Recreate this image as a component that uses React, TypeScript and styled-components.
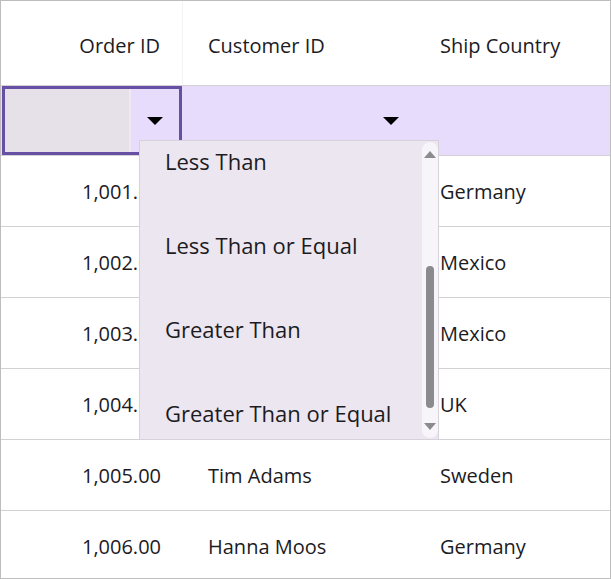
import React, { useLayoutEffect, useRef } from "react";
import styled, { createGlobalStyle } from "styled-components";

const GlobalStyle = createGlobalStyle`
  html, body { margin: 0; padding: 0; background: #ffffff; }
  body {
    font-family: "Open Sans", "Noto Sans", sans-serif;
    color: #1C1B1F;
  }
`;

const COLS = "182px 232px 1fr";

const Grid = styled.div`
  position: relative;
  box-sizing: border-box;
  width: 611px;
  height: 579px;
  border: 1px solid #bdbdbd;
  background: #ffffff;
  overflow: hidden;
  display: flex;
  flex-direction: column;
`;

const Row = styled.div<{ $height: number; $bg?: string }>`
  display: grid;
  grid-template-columns: ${COLS};
  height: ${(p) => p.$height}px;
  flex: none;
  border-bottom: 1px solid #d3d0d6;
  background: ${(p) => p.$bg ?? "transparent"};
`;

const Cell = styled.div<{ $align?: "left" | "right"; $divider?: boolean; $offset?: number }>`
  display: flex;
  align-items: center;
  justify-content: ${(p) => (p.$align === "right" ? "flex-end" : "flex-start")};
  padding: ${(p) => (p.$align === "right" ? "0 22px 0 0" : "0 0 0 25px")};
  padding-top: ${(p) => p.$offset ?? 0}px;
  font-size: 20px;
  white-space: nowrap;
  overflow: hidden;
  border-right: ${(p) => (p.$divider ? "1px solid #f3f3f3" : "none")};
`;

const FilterCellActive = styled.div`
  margin: 0 1px;
  border: 3px solid #6750a4;
  display: flex;
  background: #e8dcfc;
`;

const FilterCell = styled.div`
  display: flex;
  justify-content: flex-end;
`;

const FilterInput = styled.div`
  flex: 1;
  background: #e6e0e9;
  border-right: 2px solid #efe9f4;
`;

const DropButton = styled.div`
  width: 48px;
  flex: none;
  display: flex;
  align-items: center;
  justify-content: center;
`;

const Caret = styled.span`
  width: 0;
  height: 0;
  border-left: 8px solid transparent;
  border-right: 8px solid transparent;
  border-top: 8px solid #000000;
`;

const Popup = styled.div`
  position: absolute;
  left: 138px;
  top: 139px;
  width: 300px;
  height: 300px;
  box-sizing: border-box;
  border: 1px solid #d6d2da;
  background: #ece6f0;
  display: flex;
`;

const OptionList = styled.div`
  flex: 1;
  overflow: hidden;
`;

const Option = styled.div`
  height: 84px;
  display: flex;
  align-items: center;
  padding-left: 25px;
  font-size: 22px;
  white-space: nowrap;
  color: #1c1b1f;
`;

const ScrollTrack = styled.div`
  width: 16px;
  flex: none;
  margin: 1px 0;
  border-radius: 8px;
  background: #f7f4fa;
  display: flex;
  flex-direction: column;
`;

const ScrollArrow = styled.div`
  height: 24px;
  flex: none;
  display: flex;
  align-items: center;
  justify-content: center;
`;

const ArrowUp = styled.span`
  width: 0;
  height: 0;
  border-left: 6px solid transparent;
  border-right: 6px solid transparent;
  border-bottom: 7px solid #8c8a8f;
`;

const ArrowDown = styled.span`
  width: 0;
  height: 0;
  border-left: 6px solid transparent;
  border-right: 6px solid transparent;
  border-top: 7px solid #8c8a8f;
`;

const ThumbArea = styled.div`
  flex: 1;
  display: flex;
  flex-direction: column;
  align-items: center;
`;

const Thumb = styled.div<{ $top: number; $height: number }>`
  width: 8px;
  margin-top: ${(p) => p.$top}px;
  height: ${(p) => p.$height}px;
  border-radius: 4px;
  background: #8b8a8e;
`;

const rows = [
  { id: "1,001.00", customer: "Maria Anders", country: "Germany" },
  { id: "1,002.00", customer: "Ana Trujillo", country: "Mexico" },
  { id: "1,003.00", customer: "Antonio Moreno", country: "Mexico" },
  { id: "1,004.00", customer: "Thomas Hardy", country: "UK" },
  { id: "1,005.00", customer: "Tim Adams", country: "Sweden" },
  { id: "1,006.00", customer: "Hanna Moos", country: "Germany" },
];

const options = [
  "Equals",
  "Does Not Equal",
  "Less Than",
  "Less Than or Equal",
  "Greater Than",
  "Greater Than or Equal",
];

export default function App() {
  const listRef = useRef<HTMLDivElement>(null);
  useLayoutEffect(() => {
    if (listRef.current) listRef.current.scrollTop = 190;
  }, []);

  return (
    <>
      <GlobalStyle />
      <Grid>
        <Row $height={84}>
          <Cell $align="right" $divider $offset={4}>Order ID</Cell>
          <Cell $offset={4}>Customer ID</Cell>
          <Cell $offset={4}>Ship Country</Cell>
        </Row>
        <Row $height={69} $bg="#e8dcfc">
          <FilterCellActive>
            <FilterInput />
            <DropButton>
              <Caret />
            </DropButton>
          </FilterCellActive>
          <FilterCell>
            <DropButton>
              <Caret />
            </DropButton>
          </FilterCell>
          <FilterCell />
        </Row>
        {rows.map((r) => (
          <Row key={r.id} $height={70}>
            <Cell $align="right">{r.id}</Cell>
            <Cell>{r.customer}</Cell>
            <Cell>{r.country}</Cell>
          </Row>
        ))}
        <Popup>
          <OptionList ref={listRef}>
            {options.map((o) => (
              <Option key={o}>{o}</Option>
            ))}
          </OptionList>
          <ScrollTrack>
            <ScrollArrow>
              <ArrowUp />
            </ScrollArrow>
            <ThumbArea>
              <Thumb $top={100} $height={142} />
            </ThumbArea>
            <ScrollArrow>
              <ArrowDown />
            </ScrollArrow>
          </ScrollTrack>
        </Popup>
      </Grid>
    </>
  );
}
